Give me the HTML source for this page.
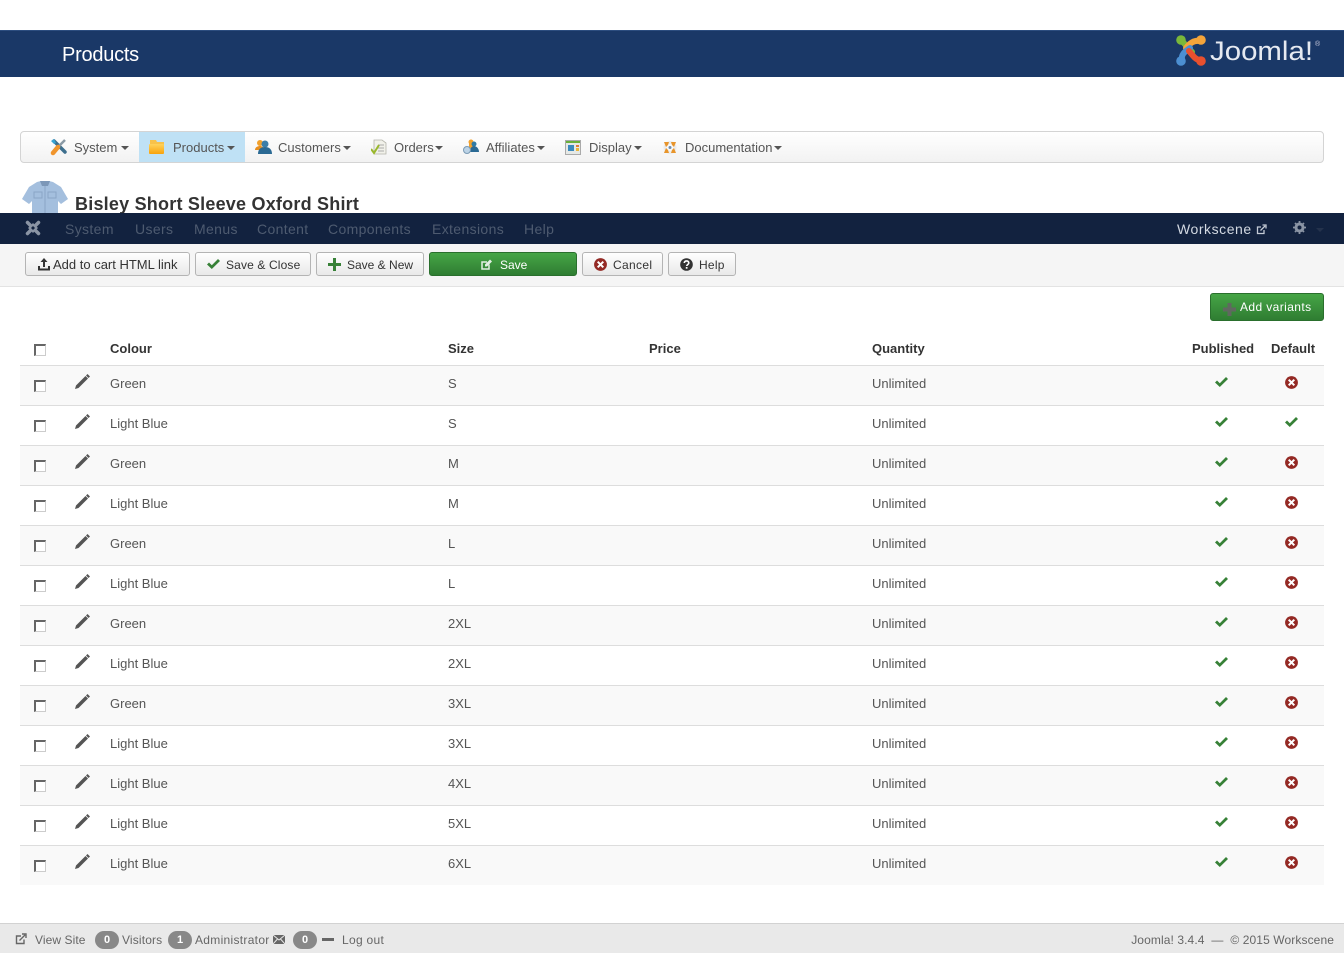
<!DOCTYPE html>
<html><head><meta charset="utf-8"><title>Products</title>
<style>
html,body{margin:0;padding:0;background:#fff}
body{width:1344px;height:953px;position:relative;overflow:hidden;font-family:"Liberation Sans",Arial,sans-serif;font-size:13px;color:#555}
.a{position:absolute;white-space:nowrap}
#hdr{left:0;top:30px;width:1344px;height:47px;background:#1a3867;border-top:1px solid #2c4d7f;box-sizing:border-box}
#title{left:62px;top:43px;font-size:20px;line-height:24px;color:#fff;letter-spacing:-.25px}
#menu{left:20px;top:131px;width:1304px;height:32px;box-sizing:border-box;border:1px solid #d4d4d4;border-radius:4px;background:linear-gradient(#fff,#f2f2f2)}
.m{top:140px;line-height:15px;color:#555}
.caret{position:absolute;width:0;height:0;border-left:4px solid transparent;border-right:4px solid transparent;border-top:4px solid #555;top:146px}
#prod{left:139px;top:132px;width:106px;height:30px;background:#bfe1f5}
#h2{left:75px;top:193px;font-size:18px;line-height:22px;font-weight:bold;color:#333;letter-spacing:.22px}
#nav{left:0;top:213px;width:1344px;height:31px;background:#12223f}
.n{top:220px;font-size:14px;line-height:18px;color:#4e5b70;letter-spacing:.36px}
#tb{left:0;top:244px;width:1344px;height:43px;box-sizing:border-box;background:#f5f5f5;border-bottom:1px solid #e3e3e3}
.b{top:252px;height:24px;box-sizing:border-box;border:1px solid #b4b4b4;border-radius:3px;background:linear-gradient(#fff,#e9e9e9);color:#333;font-size:12px;line-height:24px}
.b svg,.g svg{position:absolute}
.g{background:linear-gradient(#46a546,#2f7d32);border:1px solid #2a6f2d;color:#fff;border-radius:3px;box-sizing:border-box}
.t{top:341px;font-weight:bold;color:#333;line-height:16px}
.r{left:20px;width:1304px;height:40px;box-sizing:border-box;border-top:1px solid #ddd}
.o{background:#f9f9f9}
.r span{position:absolute;top:10px;line-height:16px;color:#555;white-space:nowrap}
.r .s1{left:90px}.r .s2{left:428px}.r .s3{left:852px}
.cb{position:absolute;width:12px;height:12px;box-sizing:border-box;border-style:solid;border-color:#666 #ccc #ccc #666;background:#fff;border-width:2px 1px 1px 2px}
.r .cb{left:14px;top:14px}
.r svg{position:absolute}
.r .p{left:55px;top:8px}.r .k{left:1195px;top:11px}.r .x{left:1265px;top:10px}.r .k2{left:1265px;top:11px}
#ft{left:0;top:923px;width:1344px;height:30px;box-sizing:border-box;background:#e9e9e9;border-top:1px solid #d2d2d2}
.f{top:932px;font-size:12px;line-height:16px;color:#666}
.bd{top:931px;width:24px;height:18px;border-radius:9px;background:#888;color:#fff;font-weight:bold;font-size:11px;line-height:18px;text-align:center}
</style></head><body>
<svg width="0" height="0" style="position:absolute"><defs>
<symbol id="pen" viewBox="0 0 15 15"><path d="M0 15l1-3.500L10.500 2 13 4.500 3.500 14z" fill="#555"/><path d="M11 1.500L12.500 0 15 2.500 13.500 4z" fill="#555"/></symbol>
<symbol id="chk" viewBox="0 0 13 10"><path d="M0 5.500L2 3.500 4.800 6.200 11 0l2 2-8.200 8z" fill="#378137"/></symbol>
<symbol id="xx" viewBox="0 0 14 14"><circle cx="7" cy="7" r="6.900" fill="#942a25"/><path d="M4 4l6 6M10 4l-6 6" stroke="#fff" stroke-width="2.200"/></symbol>
</defs></svg>

<div class="a" id="hdr"></div>
<div class="a" id="title">Products</div>
<svg class="a" style="left:1176px;top:35px" width="30" height="31" viewBox="0 0 30 31">
<g fill="none" stroke-width="6" stroke-linecap="round">
<path d="M6 6l10 11" stroke="#7ab83a"/>
<path d="M24 6c-6-1-10 2-14 7" stroke="#f4a43a"/>
<path d="M6 25c-1-5 2-8 8-12" stroke="#4c8fd2"/>
<path d="M24 25c-4 0-7-4-11-9" stroke="#e8502e"/>
</g>
<circle cx="5" cy="5" r="4.800" fill="#7ab83a"/><circle cx="25" cy="5" r="4.800" fill="#f4a43a"/><circle cx="5" cy="26" r="4.800" fill="#4c8fd2"/><circle cx="25" cy="26" r="4.800" fill="#e8502e"/>
</svg>
<svg class="a" style="left:1208px;top:34px" width="115" height="34"><text x="2" y="26" font-family="Liberation Sans" font-size="27" fill="#e6eaf1" textLength="103" lengthAdjust="spacingAndGlyphs">Joomla!</text><text x="107" y="12" font-size="7" font-family="Liberation Sans" fill="#ccd">®</text></svg>

<div class="a" id="menu"></div>
<div class="a" id="prod"></div>
<svg class="a" style="left:50px;top:138px" width="18" height="18" viewBox="0 0 18 18"><path d="M4 3l11 11" stroke="#3d6f8e" stroke-width="3.500" stroke-linecap="round"/><path d="M15 2l-6 6" stroke="#8a9aa5" stroke-width="2.500"/><path d="M8 9l-5 6" stroke="#f0952d" stroke-width="4.500" stroke-linecap="round"/><path d="M1 3l3 3 2-1-2-4z" fill="#35a3d3"/></svg>
<div class="a m" style="left:74px">System</div><div class="caret" style="left:121px"></div>
<svg class="a" style="left:149px;top:139px" width="16" height="16" viewBox="0 0 16 16"><defs><linearGradient id="fo" x1="0" y1="0" x2="0" y2="1"><stop offset="0" stop-color="#ffd35c"/><stop offset="1" stop-color="#f9a30c"/></linearGradient></defs><path d="M1 1h6l1 2h7v3H1z" fill="#f8c24a"/><rect x="0" y="5" width="15" height="10" rx="1" fill="url(#fo)"/></svg>
<div class="a m" style="left:173px">Products</div><div class="caret" style="left:227px"></div>
<svg class="a" style="left:255px;top:139px" width="17" height="16" viewBox="0 0 17 16"><circle cx="5" cy="4" r="3" fill="#f2a12c"/><path d="M0 11c0-3 3-4 5-4s4 1 4 4z" fill="#e88e1d"/><circle cx="10" cy="5" r="3.500" fill="#3c7ea8"/><path d="M3 15c0-5 3-7 7-7s7 2 7 7z" fill="#2b6a94"/></svg>
<div class="a m" style="left:278px">Customers</div><div class="caret" style="left:343px"></div>
<svg class="a" style="left:371px;top:139px" width="16" height="16" viewBox="0 0 16 16"><path d="M3 1h8l4 3v11H3z" fill="#f1f1ea" stroke="#b4b4aa" stroke-width=".8"/><path d="M7 6h6M7 9h6M7 12h6" stroke="#aaa"/><path d="M0 10l3 4 5-8" fill="none" stroke="#9ab82c" stroke-width="2"/></svg>
<div class="a m" style="left:394px">Orders</div><div class="caret" style="left:435px"></div>
<svg class="a" style="left:463px;top:139px" width="17" height="16" viewBox="0 0 17 16"><circle cx="8" cy="3" r="2.500" fill="#f2a12c"/><rect x="6" y="4" width="4" height="6" fill="#f2a12c"/><circle cx="11" cy="5" r="2.500" fill="#2f7aa5"/><path d="M7 13c0-4 2-6 4-6s5 2 5 6z" fill="#2b6a94"/><circle cx="4" cy="11" r="3.500" fill="#bcd3e6" stroke="#7a9ab5"/></svg>
<div class="a m" style="left:486px">Affiliates</div><div class="caret" style="left:537px"></div>
<svg class="a" style="left:565px;top:140px" width="16" height="15" viewBox="0 0 16 15"><rect x=".5" y=".5" width="15" height="14" fill="#e6e9e6" stroke="#aaa"/><rect x="1" y="1" width="14" height="2" fill="#69b03b"/><rect x="3" y="5" width="6" height="6" fill="#3a8abf"/><rect x="11" y="5" width="3" height="2" fill="#e07a3b"/><rect x="11" y="8" width="3" height="3" fill="#e8b63b"/></svg>
<div class="a m" style="left:589px">Display</div><div class="caret" style="left:634px"></div>
<svg class="a" style="left:662px;top:140px" width="16" height="15" viewBox="0 0 16 15"><circle cx="8" cy="7.500" r="5" fill="none" stroke="#ececec" stroke-width="3"/><path d="M2 2h5L6 5 4 7zM14 2H9l1 3 2 2zM2 13h5L6 10 4 8zM14 13H9l1-3 2-2z" fill="#e8952b"/><circle cx="8" cy="7.500" r="1.500" fill="#6d8db0"/></svg>
<div class="a m" style="left:685px">Documentation</div><div class="caret" style="left:774px"></div>

<svg class="a" style="left:21px;top:180px" width="48" height="33" viewBox="0 0 48 33"><path d="M16 2l4-1h8l4 1 8 5 7 12-7 5-3-3v12H11V21l-3 3-7-5L8 7z" fill="#a4bfde"/><path d="M19 1h10l-2 5h-6z" fill="#7c97b8"/><path d="M24 6v27M13 12h8v6h-8zM27 12h8v6h-8z" stroke="#8aa5c6" fill="none"/></svg>
<div class="a" id="h2">Bisley Short Sleeve Oxford Shirt</div>

<div class="a" id="nav"></div>
<svg class="a" style="left:25px;top:220px" width="16" height="16" viewBox="0 0 16 16"><g stroke="#8a94a4" stroke-width="3.500" stroke-linecap="round" fill="none"><path d="M2.500 2.500l11 11M13.500 2.500l-11 11"/></g><path d="M8 3l5 5-5 5-5-5z" fill="#8a94a4"/><path d="M8 6l2 2-2 2-2-2z" fill="#12223f"/></svg>
<div class="a n" style="left:65px">System</div>
<div class="a n" style="left:135px">Users</div>
<div class="a n" style="left:194px">Menus</div>
<div class="a n" style="left:257px">Content</div>
<div class="a n" style="left:328px">Components</div>
<div class="a n" style="left:432px">Extensions</div>
<div class="a n" style="left:524px">Help</div>
<div class="a n" style="left:1177px;color:#d3d9e2;letter-spacing:.55px">Workscene</div>
<svg class="a" style="left:1256px;top:224px" width="11" height="11" viewBox="0 0 11 11"><path d="M8 6v3.500H1.500V3H5" fill="none" stroke="#c3cad5" stroke-width="1.300"/><path d="M4.500 6.500L9 2M6.500 1H10v3.500" fill="none" stroke="#c3cad5" stroke-width="1.300"/></svg>
<svg class="a" style="left:1293px;top:221px" width="13" height="13" viewBox="0 0 13 13"><circle cx="6.500" cy="6.500" r="3.500" fill="none" stroke="#8a94a4" stroke-width="3"/><path d="M6.500 0v13M0 6.500h13M2 2l9 9M11 2l-9 9" stroke="#8a94a4" stroke-width="1.800"/><circle cx="6.500" cy="6.500" r="2" fill="#12223f"/></svg>
<div class="a" style="left:1316px;top:228px;width:0;height:0;border-left:4px solid transparent;border-right:4px solid transparent;border-top:4px solid #24324c"></div>

<div class="a" id="tb"></div>
<div class="a b" style="left:25px;width:165px;padding-left:27px;font-size:13px">Add to cart HTML link<svg style="left:11px;top:5px" width="14" height="13" viewBox="0 0 14 13"><path d="M7 0l3.500 4H8v5H6V4H3.500zM1 8h2v2.500h8V8h2v4.500H1z" fill="#333"/></svg></div>
<div class="a b" style="left:195px;width:116px;padding-left:30px;letter-spacing:.14px">Save &amp; Close<svg style="left:11px;top:6px" width="13" height="10"><use href="#chk"/></svg></div>
<div class="a b" style="left:316px;width:108px;padding-left:30px">Save &amp; New<svg style="left:11px;top:5px" width="13" height="13" viewBox="0 0 13 13"><path d="M5 0h3v5h5v3H8v5H5V8H0V5h5z" fill="#378137"/></svg></div>
<div class="a b g" style="left:429px;width:148px;padding-left:70px">Save<svg style="left:50px;top:5px" width="13" height="13" viewBox="0 0 13 13"><path d="M9 6.500V11H2V4h5" fill="none" stroke="#e4efe4" stroke-width="1.500"/><path d="M5 8.500V6.500l5-5 2 2-5 5z" fill="#e4efe4"/></svg></div>
<div class="a b" style="left:582px;width:81px;padding-left:30px;letter-spacing:.33px">Cancel<svg style="left:11px;top:5px" width="13" height="13"><use href="#xx"/></svg></div>
<div class="a b" style="left:668px;width:68px;padding-left:30px;letter-spacing:.25px">Help<svg style="left:11px;top:5px" width="13" height="13" viewBox="0 0 13 13"><circle cx="6.500" cy="6.500" r="6.300" fill="#333"/><path d="M4.300 5c0-2.800 4.500-2.800 4.500 0 0 1.500-2 1.500-2 3" fill="none" stroke="#fff" stroke-width="1.600"/><rect x="5.800" y="9" width="1.700" height="1.700" fill="#fff"/></svg></div>

<div class="a b g" style="left:1210px;top:293px;width:114px;height:28px;line-height:27px;padding-left:29px;letter-spacing:.4px">Add variants<svg style="left:12px;top:9px" width="13" height="13" viewBox="0 0 13 13"><path d="M4.500 0h4v4.500H13v4H8.500V13h-4V8.500H0v-4h4.500z" fill="#606860"/></svg></div>

<div class="cb a" style="left:34px;top:344px"></div>
<div class="a t" style="left:110px">Colour</div>
<div class="a t" style="left:448px">Size</div>
<div class="a t" style="left:649px">Price</div>
<div class="a t" style="left:872px">Quantity</div>
<div class="a t" style="left:1192px">Published</div>
<div class="a t" style="left:1271px">Default</div>

<div class="a r o" style="top:365px"><i class="cb"></i><svg class="p" width="15" height="15"><use href="#pen"/></svg><span class="s1">Green</span><span class="s2">S</span><span class="s3">Unlimited</span><svg class="k" width="13" height="10"><use href="#chk"/></svg><svg class="x" width="13" height="13"><use href="#xx"/></svg></div>
<div class="a r" style="top:405px"><i class="cb"></i><svg class="p" width="15" height="15"><use href="#pen"/></svg><span class="s1">Light Blue</span><span class="s2">S</span><span class="s3">Unlimited</span><svg class="k" width="13" height="10"><use href="#chk"/></svg><svg class="k2" width="13" height="10"><use href="#chk"/></svg></div>
<div class="a r o" style="top:445px"><i class="cb"></i><svg class="p" width="15" height="15"><use href="#pen"/></svg><span class="s1">Green</span><span class="s2">M</span><span class="s3">Unlimited</span><svg class="k" width="13" height="10"><use href="#chk"/></svg><svg class="x" width="13" height="13"><use href="#xx"/></svg></div>
<div class="a r" style="top:485px"><i class="cb"></i><svg class="p" width="15" height="15"><use href="#pen"/></svg><span class="s1">Light Blue</span><span class="s2">M</span><span class="s3">Unlimited</span><svg class="k" width="13" height="10"><use href="#chk"/></svg><svg class="x" width="13" height="13"><use href="#xx"/></svg></div>
<div class="a r o" style="top:525px"><i class="cb"></i><svg class="p" width="15" height="15"><use href="#pen"/></svg><span class="s1">Green</span><span class="s2">L</span><span class="s3">Unlimited</span><svg class="k" width="13" height="10"><use href="#chk"/></svg><svg class="x" width="13" height="13"><use href="#xx"/></svg></div>
<div class="a r" style="top:565px"><i class="cb"></i><svg class="p" width="15" height="15"><use href="#pen"/></svg><span class="s1">Light Blue</span><span class="s2">L</span><span class="s3">Unlimited</span><svg class="k" width="13" height="10"><use href="#chk"/></svg><svg class="x" width="13" height="13"><use href="#xx"/></svg></div>
<div class="a r o" style="top:605px"><i class="cb"></i><svg class="p" width="15" height="15"><use href="#pen"/></svg><span class="s1">Green</span><span class="s2">2XL</span><span class="s3">Unlimited</span><svg class="k" width="13" height="10"><use href="#chk"/></svg><svg class="x" width="13" height="13"><use href="#xx"/></svg></div>
<div class="a r" style="top:645px"><i class="cb"></i><svg class="p" width="15" height="15"><use href="#pen"/></svg><span class="s1">Light Blue</span><span class="s2">2XL</span><span class="s3">Unlimited</span><svg class="k" width="13" height="10"><use href="#chk"/></svg><svg class="x" width="13" height="13"><use href="#xx"/></svg></div>
<div class="a r o" style="top:685px"><i class="cb"></i><svg class="p" width="15" height="15"><use href="#pen"/></svg><span class="s1">Green</span><span class="s2">3XL</span><span class="s3">Unlimited</span><svg class="k" width="13" height="10"><use href="#chk"/></svg><svg class="x" width="13" height="13"><use href="#xx"/></svg></div>
<div class="a r" style="top:725px"><i class="cb"></i><svg class="p" width="15" height="15"><use href="#pen"/></svg><span class="s1">Light Blue</span><span class="s2">3XL</span><span class="s3">Unlimited</span><svg class="k" width="13" height="10"><use href="#chk"/></svg><svg class="x" width="13" height="13"><use href="#xx"/></svg></div>
<div class="a r o" style="top:765px"><i class="cb"></i><svg class="p" width="15" height="15"><use href="#pen"/></svg><span class="s1">Light Blue</span><span class="s2">4XL</span><span class="s3">Unlimited</span><svg class="k" width="13" height="10"><use href="#chk"/></svg><svg class="x" width="13" height="13"><use href="#xx"/></svg></div>
<div class="a r" style="top:805px"><i class="cb"></i><svg class="p" width="15" height="15"><use href="#pen"/></svg><span class="s1">Light Blue</span><span class="s2">5XL</span><span class="s3">Unlimited</span><svg class="k" width="13" height="10"><use href="#chk"/></svg><svg class="x" width="13" height="13"><use href="#xx"/></svg></div>
<div class="a r o" style="top:845px"><i class="cb"></i><svg class="p" width="15" height="15"><use href="#pen"/></svg><span class="s1">Light Blue</span><span class="s2">6XL</span><span class="s3">Unlimited</span><svg class="k" width="13" height="10"><use href="#chk"/></svg><svg class="x" width="13" height="13"><use href="#xx"/></svg></div>

<div class="a" id="ft"></div>
<svg class="a" style="left:15px;top:933px" width="12" height="12" viewBox="0 0 12 12"><path d="M9 6.500V10.500H1.500V3H6" fill="none" stroke="#666" stroke-width="1.400"/><path d="M4.500 7.500L10 2M7 1h4v4" fill="none" stroke="#666" stroke-width="1.400"/></svg>
<div class="a f" style="left:35px;letter-spacing:.08px">View Site</div>
<div class="a bd" style="left:95px">0</div>
<div class="a f" style="left:122px;letter-spacing:.15px">Visitors</div>
<div class="a bd" style="left:168px">1</div>
<div class="a f" style="left:195px;letter-spacing:.3px">Administrator</div>
<svg class="a" style="left:273px;top:935px" width="12" height="9" viewBox="0 0 12 9"><rect width="12" height="9" fill="#666"/><path d="M0 0l6 5 6-5M0 9l4.500-5M12 9L7.500 4" fill="none" stroke="#e9e9e9"/></svg>
<div class="a bd" style="left:293px">0</div>
<div class="a" style="left:322px;top:938px;width:12px;height:3px;background:#666"></div>
<div class="a f" style="left:342px;letter-spacing:.3px">Log out</div>
<div class="a f" style="right:10px;letter-spacing:.1px">Joomla! 3.4.4 &nbsp;— &nbsp;© 2015 Workscene</div>
</body></html>
